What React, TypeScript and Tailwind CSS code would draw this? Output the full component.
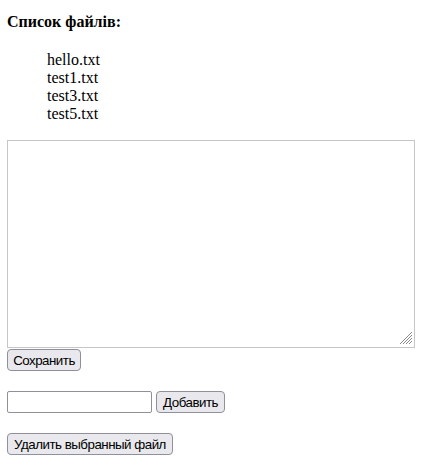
import React from "react";

const btn =
  "box-border h-[22px] px-0 border border-[#8f8f9d] rounded-[4px] bg-[#e9e9ed] text-black text-[13.33px] leading-[15px] tracking-[-0.5px] whitespace-nowrap font-['Liberation_Sans',Arial,sans-serif] flex items-center justify-center";

export default function App() {
  return (
    <div className="min-h-screen bg-white text-black pl-[7px] pt-[13px] font-['Liberation_Serif','Times_New_Roman',serif]">
      <h3 className="text-[16px] font-bold leading-[18px]">Список файлів:</h3>
      <ul className="mt-[20px] pl-[40px] text-[16px] leading-[18px] list-none">
        <li>hello.txt</li>
        <li>test1.txt</li>
        <li>test3.txt</li>
        <li>test5.txt</li>
      </ul>
      <div className="relative mt-[17px] w-[408px] h-[208px]">
        <textarea className="block box-border w-full h-full border border-[#c6c6c6] bg-white resize-none outline-none" />
        <svg
          className="absolute right-[3px] bottom-[3px]"
          width="13"
          height="13"
          viewBox="0 0 13 13"
          aria-hidden="true"
        >
          <g stroke="#8a8a8a" strokeWidth="1" shapeRendering="crispEdges">
            <line x1="12.5" y1="0.5" x2="0.5" y2="12.5" />
            <line x1="12.5" y1="3.5" x2="3.5" y2="12.5" />
            <line x1="12.5" y1="6.5" x2="6.5" y2="12.5" />
            <line x1="12.5" y1="9.5" x2="9.5" y2="12.5" />
          </g>
        </svg>
      </div>
      <button className={`${btn} mt-[1px] w-[74px]`}>Сохранить</button>
      <div className="mt-[20px] flex items-center gap-[4px]">
        <input
          type="text"
          className="box-border w-[145px] h-[22px] border border-[#8f8f9d] rounded-[2px] bg-white outline-none"
        />
        <button className={`${btn} w-[69px]`}>Добавить</button>
      </div>
      <button className={`${btn} mt-[20px] w-[166px]`}>Удалить выбранный файл</button>
    </div>
  );
}
